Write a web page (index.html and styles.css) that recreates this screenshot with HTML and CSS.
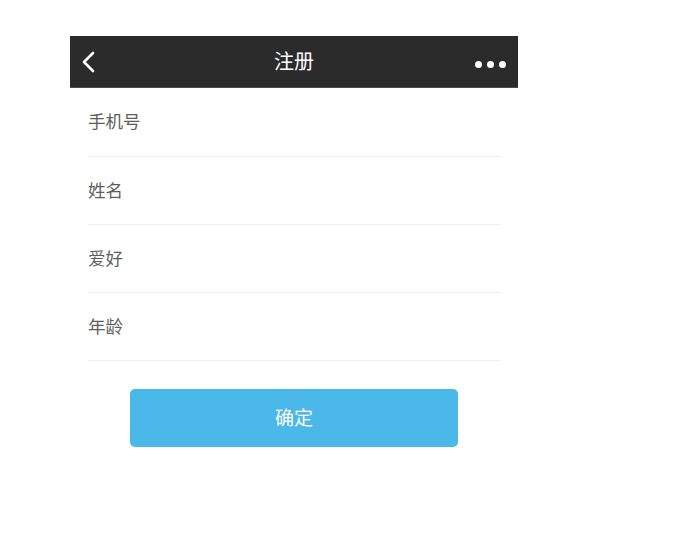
FILE: index.html
```html
<!DOCTYPE html>
<html lang="zh">
<head>
<meta charset="utf-8">
<link rel="stylesheet" href="styles.css">
</head>
<body>
<div class="phone">
  <header class="nav">
    <span class="back">
      <svg width="14" height="22" viewBox="0 0 14 22"><path d="M12 2 L3 11 L12 20" fill="none" stroke="#fff" stroke-width="2.6" stroke-linecap="round" stroke-linejoin="round"/></svg>
    </span>
    <span class="title">注册</span>
    <span class="more"><i></i><i></i><i></i></span>
  </header>
  <div class="form">
    <div class="row">手机号</div>
    <div class="row">姓名</div>
    <div class="row">爱好</div>
    <div class="row">年龄</div>
  </div>
  <button class="submit">确定</button>
</div>
</body>
</html>
```
FILE: styles.css
```css
html, body {
  margin: 0;
  padding: 0;
  background: #fff;
  font-family: "Noto Sans CJK SC", "Noto Sans", sans-serif;
}
.phone {
  width: 448px;
  margin: 36px 0 0 70px;
}
.nav {
  height: 52px;
  background: #2b2b2b;
  display: flex;
  align-items: center;
  position: relative;
  box-sizing: border-box;
  border-bottom: 1px solid #4a4a4a;
}
.back {
  display: flex;
  margin-left: 11px;
  margin-top: 1px;
}
.title {
  position: absolute;
  left: 0;
  right: 0;
  text-align: center;
  color: #fff;
  font-size: 20px;
  line-height: 52px;
  top: -1px;
}
.more {
  margin-left: auto;
  margin-right: 12px;
  display: flex;
  gap: 5px;
  margin-top: 5px;
}
.more i {
  width: 7px;
  height: 7px;
  border-radius: 50%;
  background: #fff;
}
.form {
  padding: 0 17px 0 18px;
}
.row {
  box-sizing: content-box;
  height: 64px;
  padding-bottom: 3px;
  border-bottom: 1px solid #eeeeee;
  display: flex;
  align-items: center;
  font-size: 17.5px;
  color: #5e5e5e;
}
.row:first-child {
  height: 65px;
}
.submit {
  display: block;
  width: 328px;
  height: 58px;
  margin: 28px auto 0;
  background: #4bb8ea;
  border: none;
  border-radius: 5px;
  color: #fff;
  font-family: inherit;
  font-size: 19px;
  padding: 0 0 3px;
}
```
